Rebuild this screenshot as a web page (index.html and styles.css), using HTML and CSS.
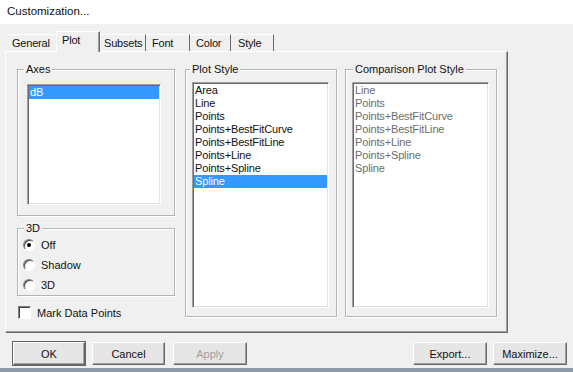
FILE: index.html
```html
<!DOCTYPE html>
<html lang="en">
<head>
    <meta charset="UTF-8">
    <meta name="viewport" content="width=device-width, initial-scale=1.0">
    <title>Customization...</title>
    <link rel="stylesheet" href="styles.css">
</head>
<body>
    <div class="titlebar">Customization...</div>
    <div class="dialog">
        <div class="tabs">
            <div class="tab tab-general">General</div>
            <div class="tab tab-plot active">Plot</div>
            <div class="tab tab-subsets">Subsets</div>
            <div class="tab tab-font">Font</div>
            <div class="tab tab-color">Color</div>
            <div class="tab tab-style">Style</div>
        </div>
        <div class="panel">
            <div class="col-left">
                <div class="group group-axes">
                    <div class="group-title">Axes</div>
                    <div class="list list-axes">
                        <div class="item selected">dB</div>
                    </div>
                </div>
                <div class="group group-3d">
                    <div class="group-title">3D</div>
                    <label class="option"><span class="radio checked"></span>Off</label>
                    <label class="option"><span class="radio"></span>Shadow</label>
                    <label class="option"><span class="radio"></span>3D</label>
                </div>
                <label class="check"><span class="box"></span>Mark Data Points</label>
            </div>
            <div class="group group-style">
                <div class="group-title">Plot Style</div>
                <div class="list list-style">
                    <div class="item">Area</div>
                    <div class="item">Line</div>
                    <div class="item">Points</div>
                    <div class="item">Points+BestFitCurve</div>
                    <div class="item">Points+BestFitLine</div>
                    <div class="item">Points+Line</div>
                    <div class="item">Points+Spline</div>
                    <div class="item selected">Spline</div>
                </div>
            </div>
            <div class="group group-compare">
                <div class="group-title">Comparison Plot Style</div>
                <div class="list list-style disabled">
                    <div class="item">Line</div>
                    <div class="item">Points</div>
                    <div class="item">Points+BestFitCurve</div>
                    <div class="item">Points+BestFitLine</div>
                    <div class="item">Points+Line</div>
                    <div class="item">Points+Spline</div>
                    <div class="item">Spline</div>
                </div>
            </div>
        </div>
        <div class="buttons">
            <button class="btn btn-ok default">OK</button>
            <button class="btn btn-cancel">Cancel</button>
            <button class="btn btn-apply" disabled>Apply</button>
            <div class="spacer"></div>
            <button class="btn btn-export">Export...</button>
            <button class="btn btn-max">Maximize...</button>
        </div>
    </div>
    <div class="strip"></div>
</body>
</html>
```

FILE: styles.css
```css
body {
    margin: 0;
    background: #f0f0f0;
    font-family: "Liberation Sans", Arial, sans-serif;
    font-size: 11px;
    color: #111;
}
.titlebar {
    height: 24px;
    line-height: 23px;
    padding-left: 7px;
    background: #fff;
    font-size: 11.5px;
}
.dialog {
    padding-top: 7px;
}

/* tabs */
.tabs {
    display: flex;
    align-items: flex-end;
    height: 20px;
    margin-left: 6px;
}
.tab {
    box-sizing: border-box;
    height: 17px;
    line-height: 16px;
    padding-left: 6px;
    letter-spacing: -0.2px;
    white-space: nowrap;
    border-top: 1px solid #fff;
    border-right: 1px solid #696969;
}
.tab.active {
    position: relative;
    height: 21px;
    margin-bottom: -1px;
    line-height: 16px;
    border-left: 1px solid #fff;
    background: #f0f0f0;
    box-shadow: inset -1px 0 #a0a0a0;
}
.tab-general { width: 50px; border-right-color: transparent; }
.tab-plot { width: 44px; padding-left: 5px; }
.tab-subsets { width: 46px; padding-left: 4px; }
.tab-font { width: 44px; padding-left: 6px; }
.tab-color { width: 41px; }
.tab-style { width: 43px; padding-left: 7px; }

/* main panel */
.panel {
    box-sizing: border-box;
    display: flex;
    align-items: flex-start;
    width: 503px;
    height: 282px;
    margin-left: 5px;
    padding: 17px 0 0 11px;
    border: 1px solid;
    border-color: #fff #696969 #696969 #fff;
    box-shadow: inset -1px -1px #a0a0a0;
}
.col-left {
    width: 158px;
}
.group {
    box-sizing: border-box;
    border: 1px solid #b4b4b4;
    box-shadow: inset 1px 1px #fff, 1px 1px #fff;
}
.group-title {
    width: fit-content;
    margin: -8px 0 0 6px;
    padding: 0 2px;
    line-height: 14px;
    background: #f0f0f0;
}
.group-axes {
    height: 147px;
}
.group-3d {
    height: 68px;
    margin-top: 12px;
}
.group-style {
    width: 152px;
    height: 248px;
    margin-left: 10px;
}
.group-style .group-title {
    margin-left: 4px;
}
.group-compare {
    width: 152px;
    height: 248px;
    margin-left: 8px;
}
.group-compare .group-title {
    margin-left: 7px;
}

/* list boxes */
.list {
    box-sizing: border-box;
    padding: 1px;
    background: #fff;
    border: 1px solid;
    border-color: #a0a0a0 #fff #fff #a0a0a0;
    box-shadow: inset 1px 1px #696969, inset -1px -1px #e3e3e3;
}
.list-axes {
    width: 134px;
    height: 121px;
    margin: 8px 0 0 9px;
}
.list-style {
    width: 137px;
    height: 226px;
    margin: 6px 0 0 6px;
}
.item {
    height: 13px;
    line-height: 13px;
    padding-left: 1px;
    white-space: nowrap;
    letter-spacing: -0.15px;
}
.item.selected {
    background: #3399ff;
    color: #fff;
}
.disabled .item {
    color: #6d6d6d;
}

/* radio + checkbox */
.option {
    display: flex;
    align-items: center;
    height: 20px;
    padding-left: 5px;
}
.radio {
    box-sizing: border-box;
    display: flex;
    align-items: center;
    justify-content: center;
    width: 12px;
    height: 12px;
    margin-right: 6px;
    border-radius: 50%;
    border: 1px solid;
    border-color: #808080 #fff #fff #808080;
    box-shadow: inset 1px 1px #404040;
    background: #fff;
}
.radio.checked::after {
    content: "";
    width: 4px;
    height: 4px;
    border-radius: 50%;
    background: #000;
}
.check {
    display: flex;
    align-items: center;
    height: 13px;
    margin: 10px 0 0 1px;
}
.box {
    box-sizing: border-box;
    width: 13px;
    height: 13px;
    margin-right: 6px;
    border: 1px solid;
    border-color: #808080 #fff #fff #808080;
    box-shadow: inset 1px 1px #404040;
    background: #fff;
}

/* bottom buttons */
.buttons {
    display: flex;
    margin-top: 9px;
    padding: 0 6px 0 13px;
}
.btn {
    box-sizing: border-box;
    height: 23px;
    padding: 0;
    font-family: "Liberation Sans", Arial, sans-serif;
    font-size: 11px;
    color: #111;
    background: #e6e6e6;
    border: 1px solid;
    border-color: #fff #696969 #696969 #fff;
    box-shadow: inset -1px -1px #a0a0a0;
}
.btn.default {
    box-shadow: 0 0 0 1px #646464, inset -1px -1px #a0a0a0;
}
.btn:disabled {
    color: #a0a0a0;
}
.btn-ok { width: 72px; }
.btn-cancel { width: 73px; margin-left: 7px; }
.btn-apply { width: 74px; margin-left: 8px; }
.btn-export { width: 74px; }
.btn-max { width: 74px; margin-left: 6px; }
.spacer {
    flex: 1;
}
.strip {
    height: 4px;
    margin-top: 3px;
    background: #8d9aa8;
}
```
